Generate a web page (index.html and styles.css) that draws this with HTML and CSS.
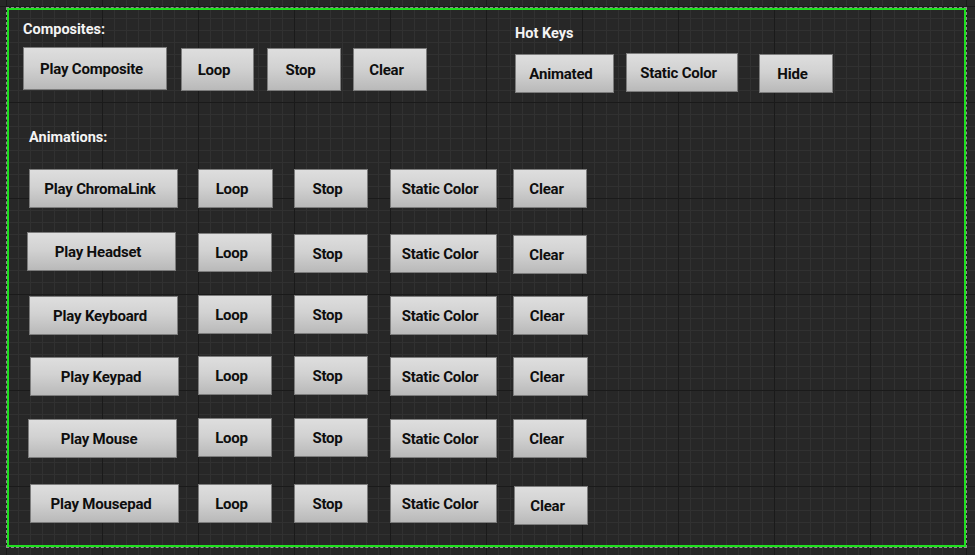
FILE: index.html
```html
<!DOCTYPE html>
<html lang="en">
<head>
<meta charset="utf-8">
<title>UMG Designer</title>
<link rel="stylesheet" href="styles.css">
</head>
<body>
<div class="frame">
  <div class="top">
    <div class="group composites">
      <div class="label">Composites:</div>
      <div class="btnrow">
        <div class="btn w-comp h43">Play Composite</div>
        <div class="btn w-loop h43 d1 g14">Loop</div>
        <div class="btn w-74 h43 d1 g13">Stop</div>
        <div class="btn w-74 h43 d1 g12">Clear</div>
      </div>
    </div>
    <div class="group hotkeys">
      <div class="label">Hot Keys</div>
      <div class="btnrow hk">
        <div class="btn w-anim d1">Animated</div>
        <div class="btn w-static2 g12">Static Color</div>
        <div class="btn w-74 d1 g21">Hide</div>
      </div>
    </div>
  </div>

  <div class="anims">
    <div class="label">Animations:</div>
    <div class="rows">
      <div class="row">
        <div class="btn w-play l2">Play ChromaLink</div>
        <div class="btn w-75">Loop</div>
        <div class="btn w-74">Stop</div>
        <div class="btn w-static">Static Color</div>
        <div class="btn w-74">Clear</div>
      </div>
      <div class="row">
        <div class="btn w-play">Play Headset</div>
        <div class="btn w-74 d1">Loop</div>
        <div class="btn w-74 d2">Stop</div>
        <div class="btn w-static d2">Static Color</div>
        <div class="btn w-74 d3">Clear</div>
      </div>
      <div class="row">
        <div class="btn w-play l2 d1">Play Keyboard</div>
        <div class="btn w-74">Loop</div>
        <div class="btn w-74">Stop</div>
        <div class="btn w-static d1">Static Color</div>
        <div class="btn w-75 d1">Clear</div>
      </div>
      <div class="row">
        <div class="btn w-play l3 d1">Play Keypad</div>
        <div class="btn w-74">Loop</div>
        <div class="btn w-74">Stop</div>
        <div class="btn w-static d1">Static Color</div>
        <div class="btn w-75 d1">Clear</div>
      </div>
      <div class="row">
        <div class="btn w-play l1 d1">Play Mouse</div>
        <div class="btn w-74">Loop</div>
        <div class="btn w-74">Stop</div>
        <div class="btn w-static d1">Static Color</div>
        <div class="btn w-74 d1">Clear</div>
      </div>
      <div class="row">
        <div class="btn w-play l3">Play Mousepad</div>
        <div class="btn w-74">Loop</div>
        <div class="btn w-74">Stop</div>
        <div class="btn w-static">Static Color</div>
        <div class="btn w-74 d2 l1">Clear</div>
      </div>
    </div>
  </div>
</div>
</body>
</html>
```

FILE: styles.css
```css
html, body {
  margin: 0;
  padding: 0;
}

body {
  width: 975px;
  height: 555px;
  overflow: hidden;
  font-family: Roboto, "Liberation Sans", sans-serif;
  background-color: #272727;
  background-image:
    linear-gradient(to right, #1a1a1a 1px, transparent 1px),
    linear-gradient(to bottom, #1a1a1a 1px, transparent 1px),
    linear-gradient(to right, #313131 1px, transparent 1px),
    linear-gradient(to bottom, #313131 1px, transparent 1px);
  background-size: 96px 96px, 96px 96px, 12px 12px, 12px 12px;
  background-position: 6px 6px;
  padding-top: 8px;
  padding-left: 7px;
  box-sizing: border-box;
}

.frame {
  width: 959px;
  height: 539px;
  box-sizing: border-box;
  border: 2px solid #1fe01f;
  outline: 1px dashed #8d8d8d;
  padding: 12px 0 0 14px;
}

.label {
  color: #f4f4f4;
  font-weight: 700;
  font-size: 14.5px;
  line-height: 16px;
}

.top {
  display: flex;
  align-items: flex-start;
}

.btnrow {
  display: flex;
  align-items: flex-start;
  margin-top: 9px;
}

.hotkeys {
  margin-left: 88px;
  margin-top: 4px;
}

.btnrow.hk {
  margin-top: 11px;
}

.btn {
  box-sizing: border-box;
  height: 39px;
  flex: none;
  display: flex;
  align-items: center;
  justify-content: center;
  padding-right: 7px;
  border: 1px solid #7c7c7c;
  background: linear-gradient(to bottom, #dedede 0%, #d2d2d2 45%, #b9b9b9 100%);
  color: #0e0e0e;
  font-weight: 700;
  font-size: 15px;
  letter-spacing: -0.2px;
  white-space: nowrap;
}

.h43 { height: 43px; }

.w-comp { width: 144px; }
.w-loop { width: 73px; }
.w-74 { width: 74px; }
.w-75 { width: 75px; }
.w-anim { width: 99px; }
.w-static2 { width: 112px; }
.w-static { width: 107px; }
.w-play { width: 149px; }

.g12 { margin-left: 12px; }
.g13 { margin-left: 13px; }
.g14 { margin-left: 14px; }
.g21 { margin-left: 21px; }

.d1 { margin-top: 1px; }
.d2 { margin-top: 2px; }
.d3 { margin-top: 3px; }

.l1 { margin-left: 1px; }
.l2 { margin-left: 2px; }
.l3 { margin-left: 3px; }

.anims {
  margin-top: 37px;
  margin-left: 7px;
}

.anims .label {
  margin-left: -1px;
}

.rows {
  margin-top: 23px;
  margin-left: -3px;
}

.row {
  display: grid;
  grid-template-columns: 171px 96px 96px 123px 75px;
  align-items: start;
  height: 39px;
}

.row:nth-child(2) { margin-top: 24px; }
.row:nth-child(3) { margin-top: 24px; }
.row:nth-child(4) { margin-top: 22px; }
.row:nth-child(5) { margin-top: 23px; }
.row:nth-child(6) { margin-top: 27px; }
```
